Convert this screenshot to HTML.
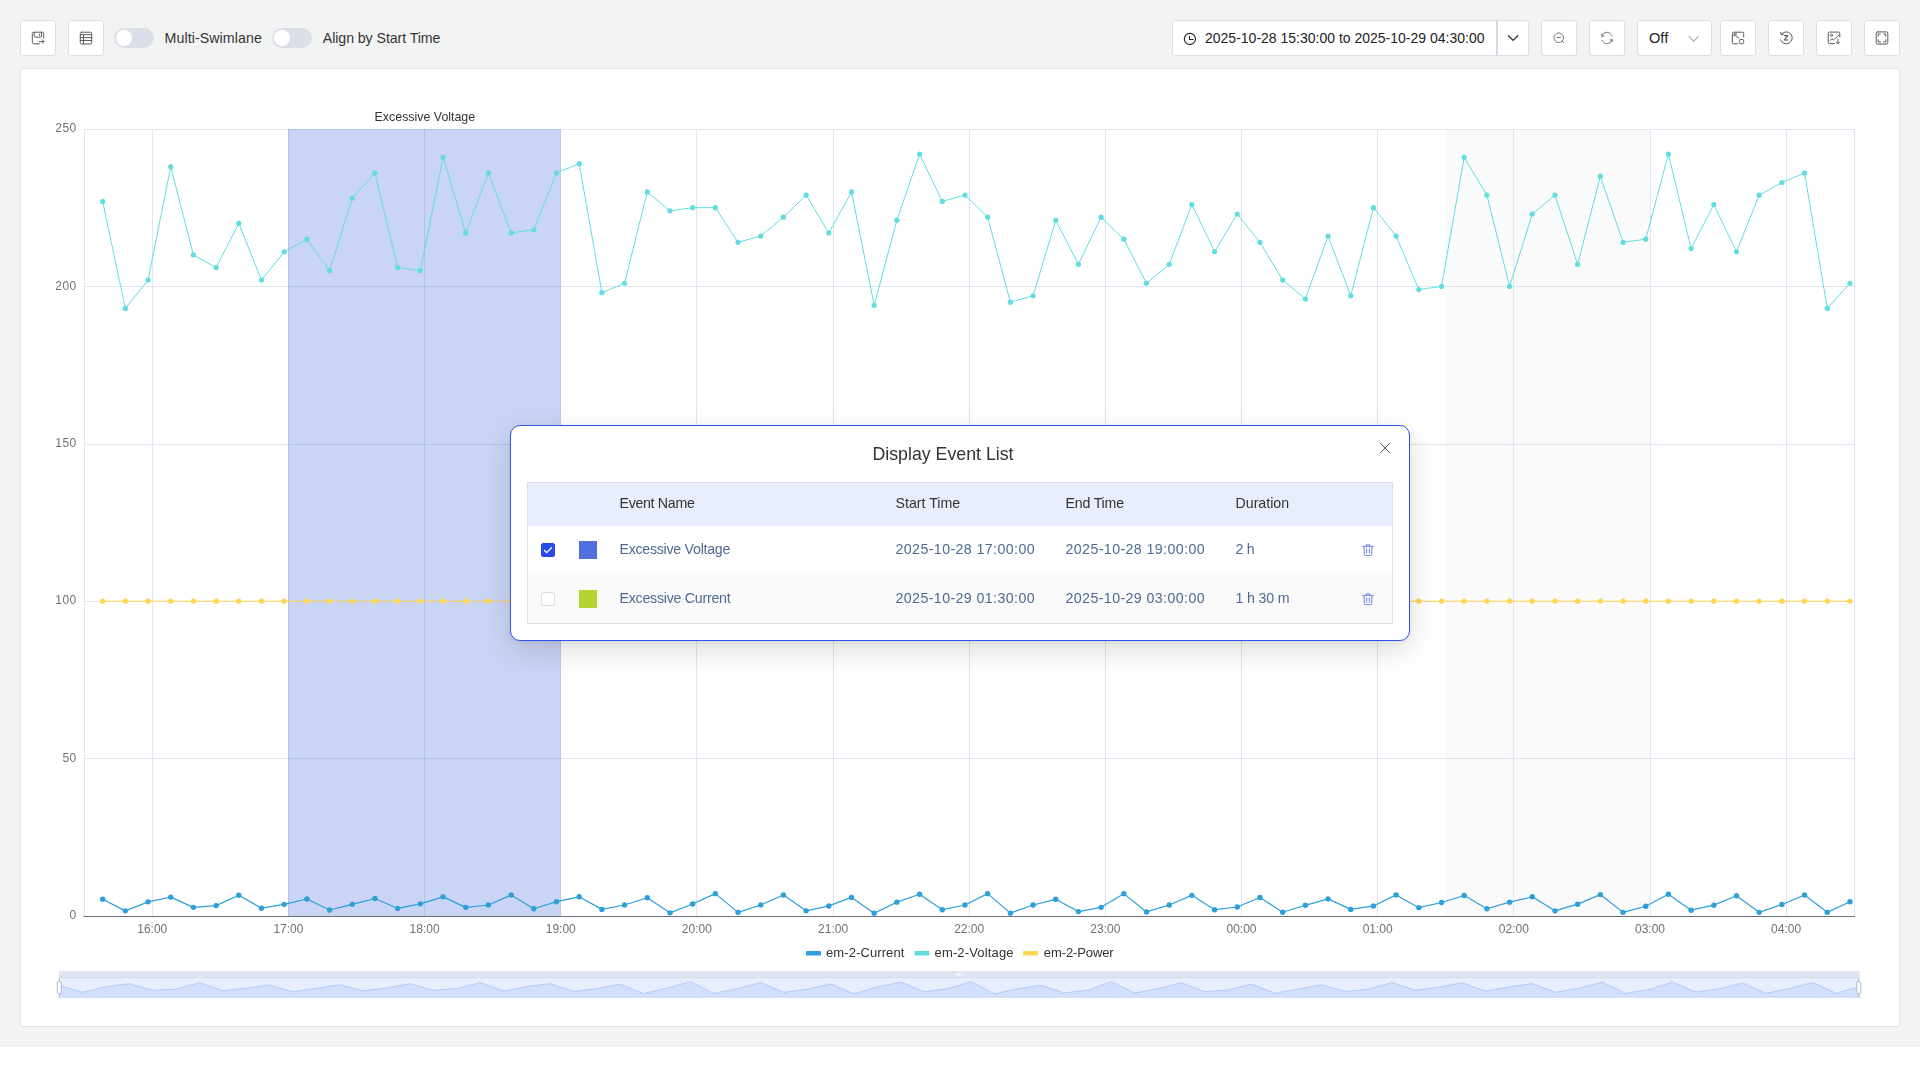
<!DOCTYPE html>
<html lang="en">
<head>
<meta charset="utf-8">
<title>Display Event List</title>
<style>
html,body{margin:0;padding:0;background:#fff;}
body{width:1920px;height:1065px;overflow:hidden;position:relative;font-family:"Liberation Sans",Arial,sans-serif;color:#333;}
.page{position:absolute;left:0;top:0;width:1920px;height:1047px;background:#f2f4f4;}
.btn{position:absolute;top:20px;height:36px;box-sizing:border-box;background:#fff;border:1px solid #dcdfe8;border-radius:3px;}
.btn svg{position:absolute;left:-1px;top:-1px;}
.sw{position:absolute;top:28px;width:40px;height:20px;border-radius:10px;background:#dcdfea;}
.sw i{position:absolute;left:2px;top:2px;width:16px;height:16px;border-radius:8px;background:#fff;}
.lbl{position:absolute;top:29px;height:18px;line-height:18px;font-size:14.2px;color:#333;white-space:nowrap;}
.dp{position:absolute;left:1172px;top:20px;width:357px;height:36px;box-sizing:border-box;background:#fff;border:1px solid #dcdfe8;border-radius:3px;}
.dpt{position:absolute;left:32px;top:8px;line-height:18px;font-size:14px;color:#222;white-space:nowrap;}
.dpb{position:absolute;left:323px;top:-1px;width:32px;height:36px;border-left:2px solid #d5d8ea;}
.dpb svg{position:absolute;left:0;top:0;}
.sel span{position:absolute;left:11px;top:8px;line-height:18px;font-size:14.6px;color:#222;}
.card{position:absolute;left:20px;top:68px;width:1880px;height:959px;box-sizing:border-box;background:#fff;border:1px solid #e2e4e9;border-radius:3px;}
.chart{position:absolute;left:0;top:0;will-change:transform;}
.modal{position:absolute;left:510px;top:425px;width:900px;height:216px;box-sizing:border-box;background:#fff;border:1.5px solid #2f54eb;border-radius:10px;box-shadow:0 9px 30px rgba(0,0,0,0.14),0 2px 6px rgba(0,0,0,0.05);}
.mtitle{position:absolute;left:332px;width:200px;top:16px;text-align:center;font-size:17.75px;line-height:24px;color:#333;white-space:nowrap;}
.mclose{position:absolute;left:867.5px;top:15.5px;}
.tbl{position:absolute;left:15.5px;top:55.5px;width:866px;height:142px;box-sizing:border-box;border:1px solid #dde2ef;}
.th{position:absolute;left:0;top:0;width:864px;height:43px;background:#e8eefd;}
.th span,.tr span{position:absolute;top:0;white-space:nowrap;font-size:14.2px;}
.th span{line-height:41px;color:#333;}
.tr{position:absolute;left:0;width:864px;height:49px;}
.tr span{line-height:47px;color:#4f6993;}
.r1{top:43px;background:#fff;}
.r2{top:92px;height:48px;background:#fafafa;}
.cb{position:absolute;left:13.5px;top:17px;width:14px;height:14px;box-sizing:border-box;border:1px solid #d9dce6;border-radius:2px;background:#fff;}
.cb.on{background:#274cee;border-color:#274cee;}
.cb svg{position:absolute;left:-1px;top:-1px;}
.sq{position:absolute;left:51.5px;top:15px;width:18px;height:18px;}
.trash{position:absolute;left:833.5px;top:17.5px;}
</style>
</head>
<body>
<div class="page">
<div class="btn" style="left:20px;width:36px"><svg width="36" height="36" viewBox="0 0 36 36" fill="none" stroke="#5a5a5a" stroke-width="1" stroke-linecap="round" stroke-linejoin="round"><path d="M23.7 18.2V13.5a1.3 1.3 0 0 0-1.3-1.3H13.6a1.3 1.3 0 0 0-1.3 1.3v9a1.3 1.3 0 0 0 1.3 1.3h5.8"/><path d="M14.2 12.3v3.6a1.3 1.3 0 0 0 1.3 1.3h4.8a1.3 1.3 0 0 0 1.3-1.3v-3.6"/><path d="M19.5 14.2v1.2"/><path d="M19.4 21.6h4.5M22.2 19.8l1.8 1.8-1.8 1.8"/></svg></div>
<div class="btn" style="left:68px;width:36px"><svg width="36" height="36" viewBox="0 0 36 36" fill="none" stroke="#5a5a5a" stroke-width="1" stroke-linecap="round" stroke-linejoin="round"><rect x="12.3" y="12.2" width="11.4" height="11.8" rx="1.4"/><path d="M12.3 14.7h11.4M12.3 17.6h11.4M12.3 20.5h11.4M15.5 14.7V24"/></svg></div>
<div class="sw" style="left:114px"><i></i></div><div class="lbl" style="left:164.6px;letter-spacing:0.08px">Multi-Swimlane</div>
<div class="sw" style="left:272px"><i></i></div><div class="lbl" style="left:322.8px;letter-spacing:-0.08px">Align by Start Time</div>
<div class="dp"><svg style="position:absolute;left:9px;top:10px" width="16" height="16" viewBox="0 0 16 16" fill="none" stroke="#222" stroke-width="1.1" stroke-linecap="round" stroke-linejoin="round"><circle cx="7.9" cy="8" r="5.6"/><path d="M7.5 5.2v3.3h3.6"/></svg><span class="dpt">2025-10-28 15:30:00 to 2025-10-29 04:30:00</span><div class="dpb"><svg width="32" height="36" viewBox="0 0 32 36" fill="none" stroke="#333" stroke-width="1.3" stroke-linecap="round" stroke-linejoin="round"><path d="M10.4 15.8l4.7 4.6 4.7-4.6"/></svg></div></div>
<div class="btn" style="left:1541px;width:36px"><svg width="36" height="36" viewBox="0 0 36 36" fill="none" stroke="#777" stroke-width="1" stroke-linecap="round" stroke-linejoin="round"><circle cx="17.75" cy="17.75" r="4.8"/><path d="M16.1 17.5h3.4M21.3 21.3l1.6 1.6"/></svg></div>
<div class="btn" style="left:1589px;width:36px"><svg width="36" height="36" viewBox="0 0 36 36" fill="none" stroke="#777" stroke-width="1" stroke-linecap="round" stroke-linejoin="round"><path d="M12.8 16.2a5.3 5.3 0 0 1 10.1-0.4"/><path d="M12.6 14.2l0.2 2.1 2.1-0.3" /><path d="M23.2 19.8a5.3 5.3 0 0 1-10.1 0.4"/><path d="M23.4 21.8l-0.2-2.1-2.1 0.3"/></svg></div>
<div class="btn sel" style="left:1637px;width:75px"><span>Off</span><svg style="position:absolute;left:49px;top:13.6px" width="14" height="9" viewBox="0 0 14 9" fill="none" stroke="#a8a8a8" stroke-width="1.1" stroke-linecap="round" stroke-linejoin="round"><path d="M2 1.4l4.7 4.7 4.7-4.7"/></svg></div>
<div class="btn" style="left:1720px;width:36px"><svg width="36" height="36" viewBox="0 0 36 36" fill="none" stroke="#5a5a5a" stroke-width="1" stroke-linecap="round" stroke-linejoin="round"><path d="M23.7 17V13.5a1.3 1.3 0 0 0-1.3-1.3H13.6a1.3 1.3 0 0 0-1.3 1.3v9a1.3 1.3 0 0 0 1.3 1.3H17.6"/><rect x="19.4" y="19.5" width="4.3" height="4.2" rx="1"/><path d="M18.8 18.2L14.2 14M14.1 16.3V13.9h2.5"/></svg></div>
<div class="btn" style="left:1768px;width:36px"><svg width="36" height="36" viewBox="0 0 36 36" fill="none" stroke="#5a5a5a" stroke-width="1" stroke-linecap="round" stroke-linejoin="round"><path d="M13.4 14.2a6 6 0 1 1-0.9 5.6"/><path d="M12.6 12.4l0.5 2.3 2.3-0.5"/><path d="M16.3 15.6h3.4l-3.4 4.4h3.6" stroke-width="1.1"/></svg></div>
<div class="btn" style="left:1816px;width:36px"><svg width="36" height="36" viewBox="0 0 36 36" fill="none" stroke="#5a5a5a" stroke-width="1" stroke-linecap="round" stroke-linejoin="round"><path d="M23.8 17V13.4a1.3 1.3 0 0 0-1.3-1.3H13.5a1.3 1.3 0 0 0-1.3 1.3v9a1.3 1.3 0 0 0 1.3 1.3H18.4"/><circle cx="15.5" cy="15.3" r="1.1"/><path d="M14 20.4l1.9-1.5 1.5 1.1 5.6-4.9"/><path d="M21.9 19.3v4.3M20.3 22.1l1.6 1.6 1.6-1.6"/></svg></div>
<div class="btn" style="left:1864px;width:36px"><svg width="36" height="36" viewBox="0 0 36 36" fill="none" stroke="#5a5a5a" stroke-width="1" stroke-linecap="round" stroke-linejoin="round"><rect x="12.2" y="11.9" width="11.6" height="12.2" rx="1.4"/><path d="M14.2 16.2v-2.2h2.2M19.6 14h2.2v2.2M21.8 19.8v2.2h-2.2M16.4 22h-2.2v-2.2"/></svg></div>
<div class="card"></div>
</div>
<svg class="chart" width="1920" height="1065" viewBox="0 0 1920 1065">
<rect x="1445.4" y="129" width="205" height="787" fill="#fafafa"/>
<line x1="84" y1="758.5" x2="1855" y2="758.5" stroke="#e0e6f1" stroke-width="1"/>
<line x1="84" y1="601.5" x2="1855" y2="601.5" stroke="#e0e6f1" stroke-width="1"/>
<line x1="84" y1="444.5" x2="1855" y2="444.5" stroke="#e0e6f1" stroke-width="1"/>
<line x1="84" y1="286.5" x2="1855" y2="286.5" stroke="#e0e6f1" stroke-width="1"/>
<line x1="84" y1="129.5" x2="1855" y2="129.5" stroke="#e0e6f1" stroke-width="1"/>
<line x1="84.5" y1="129" x2="84.5" y2="916" stroke="#e0e6f1" stroke-width="1"/>
<line x1="152.5" y1="129" x2="152.5" y2="916" stroke="#e0e6f1" stroke-width="1"/>
<line x1="288.5" y1="129" x2="288.5" y2="916" stroke="#e0e6f1" stroke-width="1"/>
<line x1="424.5" y1="129" x2="424.5" y2="916" stroke="#e0e6f1" stroke-width="1"/>
<line x1="560.5" y1="129" x2="560.5" y2="916" stroke="#e0e6f1" stroke-width="1"/>
<line x1="696.5" y1="129" x2="696.5" y2="916" stroke="#e0e6f1" stroke-width="1"/>
<line x1="833.5" y1="129" x2="833.5" y2="916" stroke="#e0e6f1" stroke-width="1"/>
<line x1="969.5" y1="129" x2="969.5" y2="916" stroke="#e0e6f1" stroke-width="1"/>
<line x1="1105.5" y1="129" x2="1105.5" y2="916" stroke="#e0e6f1" stroke-width="1"/>
<line x1="1241.5" y1="129" x2="1241.5" y2="916" stroke="#e0e6f1" stroke-width="1"/>
<line x1="1377.5" y1="129" x2="1377.5" y2="916" stroke="#e0e6f1" stroke-width="1"/>
<line x1="1513.5" y1="129" x2="1513.5" y2="916" stroke="#e0e6f1" stroke-width="1"/>
<line x1="1650.5" y1="129" x2="1650.5" y2="916" stroke="#e0e6f1" stroke-width="1"/>
<line x1="1786.5" y1="129" x2="1786.5" y2="916" stroke="#e0e6f1" stroke-width="1"/>
<line x1="1854.5" y1="129" x2="1854.5" y2="916" stroke="#e0e6f1" stroke-width="1"/>
<rect x="288" y="129" width="272.8" height="787" fill="#4e6fd9" fill-opacity="0.3"/>
<line x1="83.5" y1="916.5" x2="1855" y2="916.5" stroke="#6e7079" stroke-width="1"/>
<polyline points="102.65,899.32 125.35,910.84 148.04,901.83 170.73,897.11 193.42,907.34 216.12,905.61 238.81,895.22 261.5,908.13 284.19,904.35 306.88,899 329.58,910.02 352.27,904.35 374.96,898.53 397.65,908.44 420.35,903.85 443.04,896.86 465.73,907.34 488.42,904.98 511.12,895 533.81,908.76 556.5,901.68 579.19,896.8 601.88,909.39 624.58,904.98 647.27,897.74 669.96,912.85 692.65,904.04 715.35,893.65 738.04,912.35 760.73,904.98 783.42,895 806.12,910.84 828.81,905.93 851.5,897.43 874.19,913.17 896.88,902.15 919.58,894.28 942.27,909.7 964.96,904.98 987.65,893.65 1010.35,913.17 1033.04,904.98 1055.73,899.32 1078.42,911.59 1101.12,907.34 1123.81,893.65 1146.5,911.91 1169.19,904.98 1191.88,895.35 1214.58,909.7 1237.27,907 1259.96,897.52 1282.65,912.22 1305.35,905.3 1328.04,898.84 1350.73,909.39 1373.42,905.93 1396.12,894.91 1418.81,907.66 1441.5,902.46 1464.19,895.54 1486.88,908.76 1509.58,902.15 1532.27,896.8 1554.96,910.84 1577.65,904.16 1600.35,894.59 1623.04,912.35 1645.73,906.24 1668.42,894.28 1691.12,910.18 1713.81,905.17 1736.5,895.7 1759.19,912.35 1781.88,904.51 1804.58,895 1827.27,912.35 1849.96,901.68" fill="none" stroke="#2e9fd9" stroke-width="1.2" stroke-linejoin="bevel"/><g fill="#2e9fd9"><circle cx="102.65" cy="899.32" r="2.7"/><circle cx="125.35" cy="910.84" r="2.7"/><circle cx="148.04" cy="901.83" r="2.7"/><circle cx="170.73" cy="897.11" r="2.7"/><circle cx="193.42" cy="907.34" r="2.7"/><circle cx="216.12" cy="905.61" r="2.7"/><circle cx="238.81" cy="895.22" r="2.7"/><circle cx="261.5" cy="908.13" r="2.7"/><circle cx="284.19" cy="904.35" r="2.7"/><circle cx="306.88" cy="899" r="2.7"/><circle cx="329.58" cy="910.02" r="2.7"/><circle cx="352.27" cy="904.35" r="2.7"/><circle cx="374.96" cy="898.53" r="2.7"/><circle cx="397.65" cy="908.44" r="2.7"/><circle cx="420.35" cy="903.85" r="2.7"/><circle cx="443.04" cy="896.86" r="2.7"/><circle cx="465.73" cy="907.34" r="2.7"/><circle cx="488.42" cy="904.98" r="2.7"/><circle cx="511.12" cy="895" r="2.7"/><circle cx="533.81" cy="908.76" r="2.7"/><circle cx="556.5" cy="901.68" r="2.7"/><circle cx="579.19" cy="896.8" r="2.7"/><circle cx="601.88" cy="909.39" r="2.7"/><circle cx="624.58" cy="904.98" r="2.7"/><circle cx="647.27" cy="897.74" r="2.7"/><circle cx="669.96" cy="912.85" r="2.7"/><circle cx="692.65" cy="904.04" r="2.7"/><circle cx="715.35" cy="893.65" r="2.7"/><circle cx="738.04" cy="912.35" r="2.7"/><circle cx="760.73" cy="904.98" r="2.7"/><circle cx="783.42" cy="895" r="2.7"/><circle cx="806.12" cy="910.84" r="2.7"/><circle cx="828.81" cy="905.93" r="2.7"/><circle cx="851.5" cy="897.43" r="2.7"/><circle cx="874.19" cy="913.17" r="2.7"/><circle cx="896.88" cy="902.15" r="2.7"/><circle cx="919.58" cy="894.28" r="2.7"/><circle cx="942.27" cy="909.7" r="2.7"/><circle cx="964.96" cy="904.98" r="2.7"/><circle cx="987.65" cy="893.65" r="2.7"/><circle cx="1010.35" cy="913.17" r="2.7"/><circle cx="1033.04" cy="904.98" r="2.7"/><circle cx="1055.73" cy="899.32" r="2.7"/><circle cx="1078.42" cy="911.59" r="2.7"/><circle cx="1101.12" cy="907.34" r="2.7"/><circle cx="1123.81" cy="893.65" r="2.7"/><circle cx="1146.5" cy="911.91" r="2.7"/><circle cx="1169.19" cy="904.98" r="2.7"/><circle cx="1191.88" cy="895.35" r="2.7"/><circle cx="1214.58" cy="909.7" r="2.7"/><circle cx="1237.27" cy="907" r="2.7"/><circle cx="1259.96" cy="897.52" r="2.7"/><circle cx="1282.65" cy="912.22" r="2.7"/><circle cx="1305.35" cy="905.3" r="2.7"/><circle cx="1328.04" cy="898.84" r="2.7"/><circle cx="1350.73" cy="909.39" r="2.7"/><circle cx="1373.42" cy="905.93" r="2.7"/><circle cx="1396.12" cy="894.91" r="2.7"/><circle cx="1418.81" cy="907.66" r="2.7"/><circle cx="1441.5" cy="902.46" r="2.7"/><circle cx="1464.19" cy="895.54" r="2.7"/><circle cx="1486.88" cy="908.76" r="2.7"/><circle cx="1509.58" cy="902.15" r="2.7"/><circle cx="1532.27" cy="896.8" r="2.7"/><circle cx="1554.96" cy="910.84" r="2.7"/><circle cx="1577.65" cy="904.16" r="2.7"/><circle cx="1600.35" cy="894.59" r="2.7"/><circle cx="1623.04" cy="912.35" r="2.7"/><circle cx="1645.73" cy="906.24" r="2.7"/><circle cx="1668.42" cy="894.28" r="2.7"/><circle cx="1691.12" cy="910.18" r="2.7"/><circle cx="1713.81" cy="905.17" r="2.7"/><circle cx="1736.5" cy="895.7" r="2.7"/><circle cx="1759.19" cy="912.35" r="2.7"/><circle cx="1781.88" cy="904.51" r="2.7"/><circle cx="1804.58" cy="895" r="2.7"/><circle cx="1827.27" cy="912.35" r="2.7"/><circle cx="1849.96" cy="901.68" r="2.7"/></g>
<polyline points="102.65,201.4 125.35,308.44 148.04,280.1 170.73,166.78 193.42,254.92 216.12,267.51 238.81,223.44 261.5,280.1 284.19,251.77 306.88,239.18 329.58,270.66 352.27,198.26 374.96,173.07 397.65,267.51 420.35,270.66 443.04,157.33 465.73,232.88 488.42,173.07 511.12,232.88 533.81,229.74 556.5,173.07 579.19,163.63 601.88,292.7 624.58,283.25 647.27,191.96 669.96,210.85 692.65,207.7 715.35,207.7 738.04,242.33 760.73,236.03 783.42,217.14 806.12,195.11 828.81,232.88 851.5,191.96 874.19,305.29 896.88,220.29 919.58,154.18 942.27,201.4 964.96,195.11 987.65,217.14 1010.35,302.14 1033.04,295.84 1055.73,220.29 1078.42,264.36 1101.12,217.14 1123.81,239.18 1146.5,283.25 1169.19,264.36 1191.88,204.55 1214.58,251.77 1237.27,214 1259.96,242.33 1282.65,280.1 1305.35,298.99 1328.04,236.03 1350.73,295.84 1373.42,207.7 1396.12,236.03 1418.81,289.55 1441.5,286.4 1464.19,157.33 1486.88,195.11 1509.58,286.4 1532.27,214 1554.96,195.11 1577.65,264.36 1600.35,176.22 1623.04,242.33 1645.73,239.18 1668.42,154.18 1691.12,248.62 1713.81,204.55 1736.5,251.77 1759.19,195.11 1781.88,182.52 1804.58,173.07 1827.27,308.44 1849.96,283.25" fill="none" stroke="#61dde2" stroke-width="1.0" stroke-linejoin="bevel"/><g fill="#61dde2"><circle cx="102.65" cy="201.4" r="2.6"/><circle cx="125.35" cy="308.44" r="2.6"/><circle cx="148.04" cy="280.1" r="2.6"/><circle cx="170.73" cy="166.78" r="2.6"/><circle cx="193.42" cy="254.92" r="2.6"/><circle cx="216.12" cy="267.51" r="2.6"/><circle cx="238.81" cy="223.44" r="2.6"/><circle cx="261.5" cy="280.1" r="2.6"/><circle cx="284.19" cy="251.77" r="2.6"/><circle cx="306.88" cy="239.18" r="2.6"/><circle cx="329.58" cy="270.66" r="2.6"/><circle cx="352.27" cy="198.26" r="2.6"/><circle cx="374.96" cy="173.07" r="2.6"/><circle cx="397.65" cy="267.51" r="2.6"/><circle cx="420.35" cy="270.66" r="2.6"/><circle cx="443.04" cy="157.33" r="2.6"/><circle cx="465.73" cy="232.88" r="2.6"/><circle cx="488.42" cy="173.07" r="2.6"/><circle cx="511.12" cy="232.88" r="2.6"/><circle cx="533.81" cy="229.74" r="2.6"/><circle cx="556.5" cy="173.07" r="2.6"/><circle cx="579.19" cy="163.63" r="2.6"/><circle cx="601.88" cy="292.7" r="2.6"/><circle cx="624.58" cy="283.25" r="2.6"/><circle cx="647.27" cy="191.96" r="2.6"/><circle cx="669.96" cy="210.85" r="2.6"/><circle cx="692.65" cy="207.7" r="2.6"/><circle cx="715.35" cy="207.7" r="2.6"/><circle cx="738.04" cy="242.33" r="2.6"/><circle cx="760.73" cy="236.03" r="2.6"/><circle cx="783.42" cy="217.14" r="2.6"/><circle cx="806.12" cy="195.11" r="2.6"/><circle cx="828.81" cy="232.88" r="2.6"/><circle cx="851.5" cy="191.96" r="2.6"/><circle cx="874.19" cy="305.29" r="2.6"/><circle cx="896.88" cy="220.29" r="2.6"/><circle cx="919.58" cy="154.18" r="2.6"/><circle cx="942.27" cy="201.4" r="2.6"/><circle cx="964.96" cy="195.11" r="2.6"/><circle cx="987.65" cy="217.14" r="2.6"/><circle cx="1010.35" cy="302.14" r="2.6"/><circle cx="1033.04" cy="295.84" r="2.6"/><circle cx="1055.73" cy="220.29" r="2.6"/><circle cx="1078.42" cy="264.36" r="2.6"/><circle cx="1101.12" cy="217.14" r="2.6"/><circle cx="1123.81" cy="239.18" r="2.6"/><circle cx="1146.5" cy="283.25" r="2.6"/><circle cx="1169.19" cy="264.36" r="2.6"/><circle cx="1191.88" cy="204.55" r="2.6"/><circle cx="1214.58" cy="251.77" r="2.6"/><circle cx="1237.27" cy="214" r="2.6"/><circle cx="1259.96" cy="242.33" r="2.6"/><circle cx="1282.65" cy="280.1" r="2.6"/><circle cx="1305.35" cy="298.99" r="2.6"/><circle cx="1328.04" cy="236.03" r="2.6"/><circle cx="1350.73" cy="295.84" r="2.6"/><circle cx="1373.42" cy="207.7" r="2.6"/><circle cx="1396.12" cy="236.03" r="2.6"/><circle cx="1418.81" cy="289.55" r="2.6"/><circle cx="1441.5" cy="286.4" r="2.6"/><circle cx="1464.19" cy="157.33" r="2.6"/><circle cx="1486.88" cy="195.11" r="2.6"/><circle cx="1509.58" cy="286.4" r="2.6"/><circle cx="1532.27" cy="214" r="2.6"/><circle cx="1554.96" cy="195.11" r="2.6"/><circle cx="1577.65" cy="264.36" r="2.6"/><circle cx="1600.35" cy="176.22" r="2.6"/><circle cx="1623.04" cy="242.33" r="2.6"/><circle cx="1645.73" cy="239.18" r="2.6"/><circle cx="1668.42" cy="154.18" r="2.6"/><circle cx="1691.12" cy="248.62" r="2.6"/><circle cx="1713.81" cy="204.55" r="2.6"/><circle cx="1736.5" cy="251.77" r="2.6"/><circle cx="1759.19" cy="195.11" r="2.6"/><circle cx="1781.88" cy="182.52" r="2.6"/><circle cx="1804.58" cy="173.07" r="2.6"/><circle cx="1827.27" cy="308.44" r="2.6"/><circle cx="1849.96" cy="283.25" r="2.6"/></g>
<polyline points="102.65,601.2 125.35,601.2 148.04,601.2 170.73,601.2 193.42,601.2 216.12,601.2 238.81,601.2 261.5,601.2 284.19,601.2 306.88,601.2 329.58,601.2 352.27,601.2 374.96,601.2 397.65,601.2 420.35,601.2 443.04,601.2 465.73,601.2 488.42,601.2 511.12,601.2 533.81,601.2 556.5,601.2 579.19,601.2 601.88,601.2 624.58,601.2 647.27,601.2 669.96,601.2 692.65,601.2 715.35,601.2 738.04,601.2 760.73,601.2 783.42,601.2 806.12,601.2 828.81,601.2 851.5,601.2 874.19,601.2 896.88,601.2 919.58,601.2 942.27,601.2 964.96,601.2 987.65,601.2 1010.35,601.2 1033.04,601.2 1055.73,601.2 1078.42,601.2 1101.12,601.2 1123.81,601.2 1146.5,601.2 1169.19,601.2 1191.88,601.2 1214.58,601.2 1237.27,601.2 1259.96,601.2 1282.65,601.2 1305.35,601.2 1328.04,601.2 1350.73,601.2 1373.42,601.2 1396.12,601.2 1418.81,601.2 1441.5,601.2 1464.19,601.2 1486.88,601.2 1509.58,601.2 1532.27,601.2 1554.96,601.2 1577.65,601.2 1600.35,601.2 1623.04,601.2 1645.73,601.2 1668.42,601.2 1691.12,601.2 1713.81,601.2 1736.5,601.2 1759.19,601.2 1781.88,601.2 1804.58,601.2 1827.27,601.2 1849.96,601.2" fill="none" stroke="#ffd750" stroke-width="1.0" stroke-linejoin="bevel"/><g fill="#ffd750"><circle cx="102.65" cy="601.2" r="2.6"/><circle cx="125.35" cy="601.2" r="2.6"/><circle cx="148.04" cy="601.2" r="2.6"/><circle cx="170.73" cy="601.2" r="2.6"/><circle cx="193.42" cy="601.2" r="2.6"/><circle cx="216.12" cy="601.2" r="2.6"/><circle cx="238.81" cy="601.2" r="2.6"/><circle cx="261.5" cy="601.2" r="2.6"/><circle cx="284.19" cy="601.2" r="2.6"/><circle cx="306.88" cy="601.2" r="2.6"/><circle cx="329.58" cy="601.2" r="2.6"/><circle cx="352.27" cy="601.2" r="2.6"/><circle cx="374.96" cy="601.2" r="2.6"/><circle cx="397.65" cy="601.2" r="2.6"/><circle cx="420.35" cy="601.2" r="2.6"/><circle cx="443.04" cy="601.2" r="2.6"/><circle cx="465.73" cy="601.2" r="2.6"/><circle cx="488.42" cy="601.2" r="2.6"/><circle cx="511.12" cy="601.2" r="2.6"/><circle cx="533.81" cy="601.2" r="2.6"/><circle cx="556.5" cy="601.2" r="2.6"/><circle cx="579.19" cy="601.2" r="2.6"/><circle cx="601.88" cy="601.2" r="2.6"/><circle cx="624.58" cy="601.2" r="2.6"/><circle cx="647.27" cy="601.2" r="2.6"/><circle cx="669.96" cy="601.2" r="2.6"/><circle cx="692.65" cy="601.2" r="2.6"/><circle cx="715.35" cy="601.2" r="2.6"/><circle cx="738.04" cy="601.2" r="2.6"/><circle cx="760.73" cy="601.2" r="2.6"/><circle cx="783.42" cy="601.2" r="2.6"/><circle cx="806.12" cy="601.2" r="2.6"/><circle cx="828.81" cy="601.2" r="2.6"/><circle cx="851.5" cy="601.2" r="2.6"/><circle cx="874.19" cy="601.2" r="2.6"/><circle cx="896.88" cy="601.2" r="2.6"/><circle cx="919.58" cy="601.2" r="2.6"/><circle cx="942.27" cy="601.2" r="2.6"/><circle cx="964.96" cy="601.2" r="2.6"/><circle cx="987.65" cy="601.2" r="2.6"/><circle cx="1010.35" cy="601.2" r="2.6"/><circle cx="1033.04" cy="601.2" r="2.6"/><circle cx="1055.73" cy="601.2" r="2.6"/><circle cx="1078.42" cy="601.2" r="2.6"/><circle cx="1101.12" cy="601.2" r="2.6"/><circle cx="1123.81" cy="601.2" r="2.6"/><circle cx="1146.5" cy="601.2" r="2.6"/><circle cx="1169.19" cy="601.2" r="2.6"/><circle cx="1191.88" cy="601.2" r="2.6"/><circle cx="1214.58" cy="601.2" r="2.6"/><circle cx="1237.27" cy="601.2" r="2.6"/><circle cx="1259.96" cy="601.2" r="2.6"/><circle cx="1282.65" cy="601.2" r="2.6"/><circle cx="1305.35" cy="601.2" r="2.6"/><circle cx="1328.04" cy="601.2" r="2.6"/><circle cx="1350.73" cy="601.2" r="2.6"/><circle cx="1373.42" cy="601.2" r="2.6"/><circle cx="1396.12" cy="601.2" r="2.6"/><circle cx="1418.81" cy="601.2" r="2.6"/><circle cx="1441.5" cy="601.2" r="2.6"/><circle cx="1464.19" cy="601.2" r="2.6"/><circle cx="1486.88" cy="601.2" r="2.6"/><circle cx="1509.58" cy="601.2" r="2.6"/><circle cx="1532.27" cy="601.2" r="2.6"/><circle cx="1554.96" cy="601.2" r="2.6"/><circle cx="1577.65" cy="601.2" r="2.6"/><circle cx="1600.35" cy="601.2" r="2.6"/><circle cx="1623.04" cy="601.2" r="2.6"/><circle cx="1645.73" cy="601.2" r="2.6"/><circle cx="1668.42" cy="601.2" r="2.6"/><circle cx="1691.12" cy="601.2" r="2.6"/><circle cx="1713.81" cy="601.2" r="2.6"/><circle cx="1736.5" cy="601.2" r="2.6"/><circle cx="1759.19" cy="601.2" r="2.6"/><circle cx="1781.88" cy="601.2" r="2.6"/><circle cx="1804.58" cy="601.2" r="2.6"/><circle cx="1827.27" cy="601.2" r="2.6"/><circle cx="1849.96" cy="601.2" r="2.6"/></g>
<g font-family="Liberation Sans, Arial, sans-serif" font-size="12" fill="#6e7079">
<text x="76.7" y="918.7" text-anchor="end" letter-spacing="0.45">0</text>
<text x="76.7" y="762.3" text-anchor="end" letter-spacing="0.45">50</text>
<text x="76.7" y="603.9" text-anchor="end" letter-spacing="0.45">100</text>
<text x="76.7" y="446.5" text-anchor="end" letter-spacing="0.45">150</text>
<text x="76.7" y="290.1" text-anchor="end" letter-spacing="0.45">200</text>
<text x="76.7" y="131.7" text-anchor="end" letter-spacing="0.45">250</text>
<text x="152.28" y="933" text-anchor="middle">16:00</text>
<text x="288.43" y="933" text-anchor="middle">17:00</text>
<text x="424.58" y="933" text-anchor="middle">18:00</text>
<text x="560.74" y="933" text-anchor="middle">19:00</text>
<text x="696.89" y="933" text-anchor="middle">20:00</text>
<text x="833.05" y="933" text-anchor="middle">21:00</text>
<text x="969.2" y="933" text-anchor="middle">22:00</text>
<text x="1105.35" y="933" text-anchor="middle">23:00</text>
<text x="1241.51" y="933" text-anchor="middle">00:00</text>
<text x="1377.66" y="933" text-anchor="middle">01:00</text>
<text x="1513.82" y="933" text-anchor="middle">02:00</text>
<text x="1649.97" y="933" text-anchor="middle">03:00</text>
<text x="1786.12" y="933" text-anchor="middle">04:00</text>
</g>
<text x="424.88" y="121" text-anchor="middle" font-family="Liberation Sans, Arial, sans-serif" font-size="12.4" fill="#333">Excessive Voltage</text>
<g font-family="Liberation Sans, Arial, sans-serif" font-size="13" fill="#333">
<rect x="806" y="951" width="15" height="4.5" rx="0.6" fill="#2e9fd9"/>
<text x="826" y="957.3" letter-spacing="0.1">em-2-Current</text>
<rect x="914.5" y="951" width="15" height="4.5" rx="0.6" fill="#61dde2"/>
<text x="934.5" y="957.3" letter-spacing="0.16">em-2-Voltage</text>
<rect x="1023" y="951" width="15" height="4.5" rx="0.6" fill="#ffd750"/>
<text x="1043.8" y="957.3" letter-spacing="-0.1">em-2-Power</text>
</g>
<rect x="59" y="971" width="1800.5" height="7" fill="#dfe5f3"/>
<rect x="59" y="978" width="1800.5" height="19.5" fill="#e8eefd"/>
<polygon points="59,997.5 59,985.19 82.38,992.39 105.77,986.77 129.15,983.82 152.53,990.21 175.92,989.12 199.3,982.64 222.68,990.7 246.06,988.34 269.45,985 292.83,991.88 316.21,988.34 339.6,984.7 362.98,990.89 386.36,988.02 409.75,983.66 433.13,990.21 456.51,988.73 479.9,982.5 503.28,991.09 526.66,986.67 550.05,983.62 573.43,991.48 596.81,988.73 620.19,984.21 643.58,993.65 666.96,988.14 690.34,981.65 713.73,993.33 737.11,988.73 760.49,982.5 783.88,992.39 807.26,989.32 830.64,984.01 854.03,993.84 877.41,986.96 900.79,982.05 924.18,991.68 947.56,988.73 970.94,981.65 994.32,993.84 1017.71,988.73 1041.09,985.19 1064.47,992.86 1087.86,990.21 1111.24,981.65 1134.62,993.06 1158.01,988.73 1181.39,982.72 1204.77,991.68 1228.16,989.99 1251.54,984.07 1274.92,993.25 1298.31,988.93 1321.69,984.9 1345.07,991.48 1368.45,989.32 1391.84,982.44 1415.22,990.4 1438.6,987.16 1461.99,982.83 1485.37,991.09 1508.75,986.96 1532.14,983.62 1555.52,992.39 1578.9,988.22 1602.29,982.24 1625.67,993.33 1649.05,989.52 1672.44,982.05 1695.82,991.98 1719.2,988.85 1742.58,982.93 1765.97,993.33 1789.35,988.44 1812.73,982.5 1836.12,993.33 1859.5,986.67 1859.5,997.5" fill="#d3e0fb"/>
<polyline points="59,985.19 82.38,992.39 105.77,986.77 129.15,983.82 152.53,990.21 175.92,989.12 199.3,982.64 222.68,990.7 246.06,988.34 269.45,985 292.83,991.88 316.21,988.34 339.6,984.7 362.98,990.89 386.36,988.02 409.75,983.66 433.13,990.21 456.51,988.73 479.9,982.5 503.28,991.09 526.66,986.67 550.05,983.62 573.43,991.48 596.81,988.73 620.19,984.21 643.58,993.65 666.96,988.14 690.34,981.65 713.73,993.33 737.11,988.73 760.49,982.5 783.88,992.39 807.26,989.32 830.64,984.01 854.03,993.84 877.41,986.96 900.79,982.05 924.18,991.68 947.56,988.73 970.94,981.65 994.32,993.84 1017.71,988.73 1041.09,985.19 1064.47,992.86 1087.86,990.21 1111.24,981.65 1134.62,993.06 1158.01,988.73 1181.39,982.72 1204.77,991.68 1228.16,989.99 1251.54,984.07 1274.92,993.25 1298.31,988.93 1321.69,984.9 1345.07,991.48 1368.45,989.32 1391.84,982.44 1415.22,990.4 1438.6,987.16 1461.99,982.83 1485.37,991.09 1508.75,986.96 1532.14,983.62 1555.52,992.39 1578.9,988.22 1602.29,982.24 1625.67,993.33 1649.05,989.52 1672.44,982.05 1695.82,991.98 1719.2,988.85 1742.58,982.93 1765.97,993.33 1789.35,988.44 1812.73,982.5 1836.12,993.33 1859.5,986.67" fill="none" stroke="#a9c2f9" stroke-width="0.8"/>
<line x1="59" y1="977.7" x2="1859.5" y2="977.7" stroke="#d2dbee" stroke-width="1"/>
<line x1="59" y1="997.3" x2="1859.5" y2="997.3" stroke="#d2dbee" stroke-width="1" stroke-opacity="0.8"/>
<line x1="59.3" y1="978" x2="59.3" y2="997.5" stroke="#acb8d1" stroke-width="1"/>
<rect x="57.3" y="981.5" width="4" height="12" rx="1.2" fill="#fff" stroke="#acb8d1" stroke-width="1"/>
<line x1="1858.8" y1="978" x2="1858.8" y2="997.5" stroke="#acb8d1" stroke-width="1"/>
<rect x="1856.8" y="981.5" width="4" height="12" rx="1.2" fill="#fff" stroke="#acb8d1" stroke-width="1"/>
<g stroke="#fff" stroke-width="0.9"><line x1="957" y1="972.8" x2="957" y2="976.4"/><line x1="959.5" y1="972.8" x2="959.5" y2="976.4"/><line x1="962" y1="972.8" x2="962" y2="976.4"/></g>
</svg>

<div class="modal">
  <div class="mtitle">Display Event List</div>
  <svg class="mclose" width="12" height="12" viewBox="0 0 12 12" fill="none" stroke="#555" stroke-width="1" stroke-linecap="round"><path d="M1.3 1.3l9.4 9.4M10.7 1.3L1.3 10.7"/></svg>
  <div class="tbl">
    <div class="th"><span style="left:92px;letter-spacing:-0.31px">Event Name</span><span style="left:368px">Start Time</span><span style="left:538px;letter-spacing:-0.2px">End Time</span><span style="left:708px">Duration</span></div>
    <div class="tr r1"><div class="cb on"><svg width="14" height="14" viewBox="0 0 14 14" fill="none" stroke="#fff" stroke-width="1.25" stroke-linecap="butt" stroke-linejoin="miter"><path d="M3.1 7l2.6 2.6 5.2-5.4"/></svg></div><div class="sq" style="background:#4e6fdc"></div><span style="left:92px;letter-spacing:-0.27px">Excessive Voltage</span><span style="left:368px;letter-spacing:0.41px">2025-10-28 17:00:00</span><span style="left:538px;letter-spacing:0.41px">2025-10-28 19:00:00</span><span style="left:708px;letter-spacing:-0.3px">2 h</span><svg class="trash" width="14" height="14" viewBox="0 0 14 14" fill="none" stroke="#6f86e0" stroke-width="1" stroke-linecap="round" stroke-linejoin="round"><path d="M1.6 3.4h10.8M5.2 3.2V1.8h3.6v1.4M2.9 3.6l0.5 8.2a0.9 0.9 0 0 0 0.9 0.8h5.4a0.9 0.9 0 0 0 0.9-0.8l0.5-8.2M5.6 5.8v4.4M8.4 5.8v4.4"/></svg></div>
    <div class="tr r2"><div class="cb"></div><div class="sq" style="background:#b5d431"></div><span style="left:92px;letter-spacing:-0.25px">Excessive Current</span><span style="left:368px;letter-spacing:0.41px">2025-10-29 01:30:00</span><span style="left:538px;letter-spacing:0.41px">2025-10-29 03:00:00</span><span style="left:708px;letter-spacing:-0.15px">1 h 30 m</span><svg class="trash" width="14" height="14" viewBox="0 0 14 14" fill="none" stroke="#6f86e0" stroke-width="1" stroke-linecap="round" stroke-linejoin="round"><path d="M1.6 3.4h10.8M5.2 3.2V1.8h3.6v1.4M2.9 3.6l0.5 8.2a0.9 0.9 0 0 0 0.9 0.8h5.4a0.9 0.9 0 0 0 0.9-0.8l0.5-8.2M5.6 5.8v4.4M8.4 5.8v4.4"/></svg></div>
  </div>
</div>

</body>
</html>
